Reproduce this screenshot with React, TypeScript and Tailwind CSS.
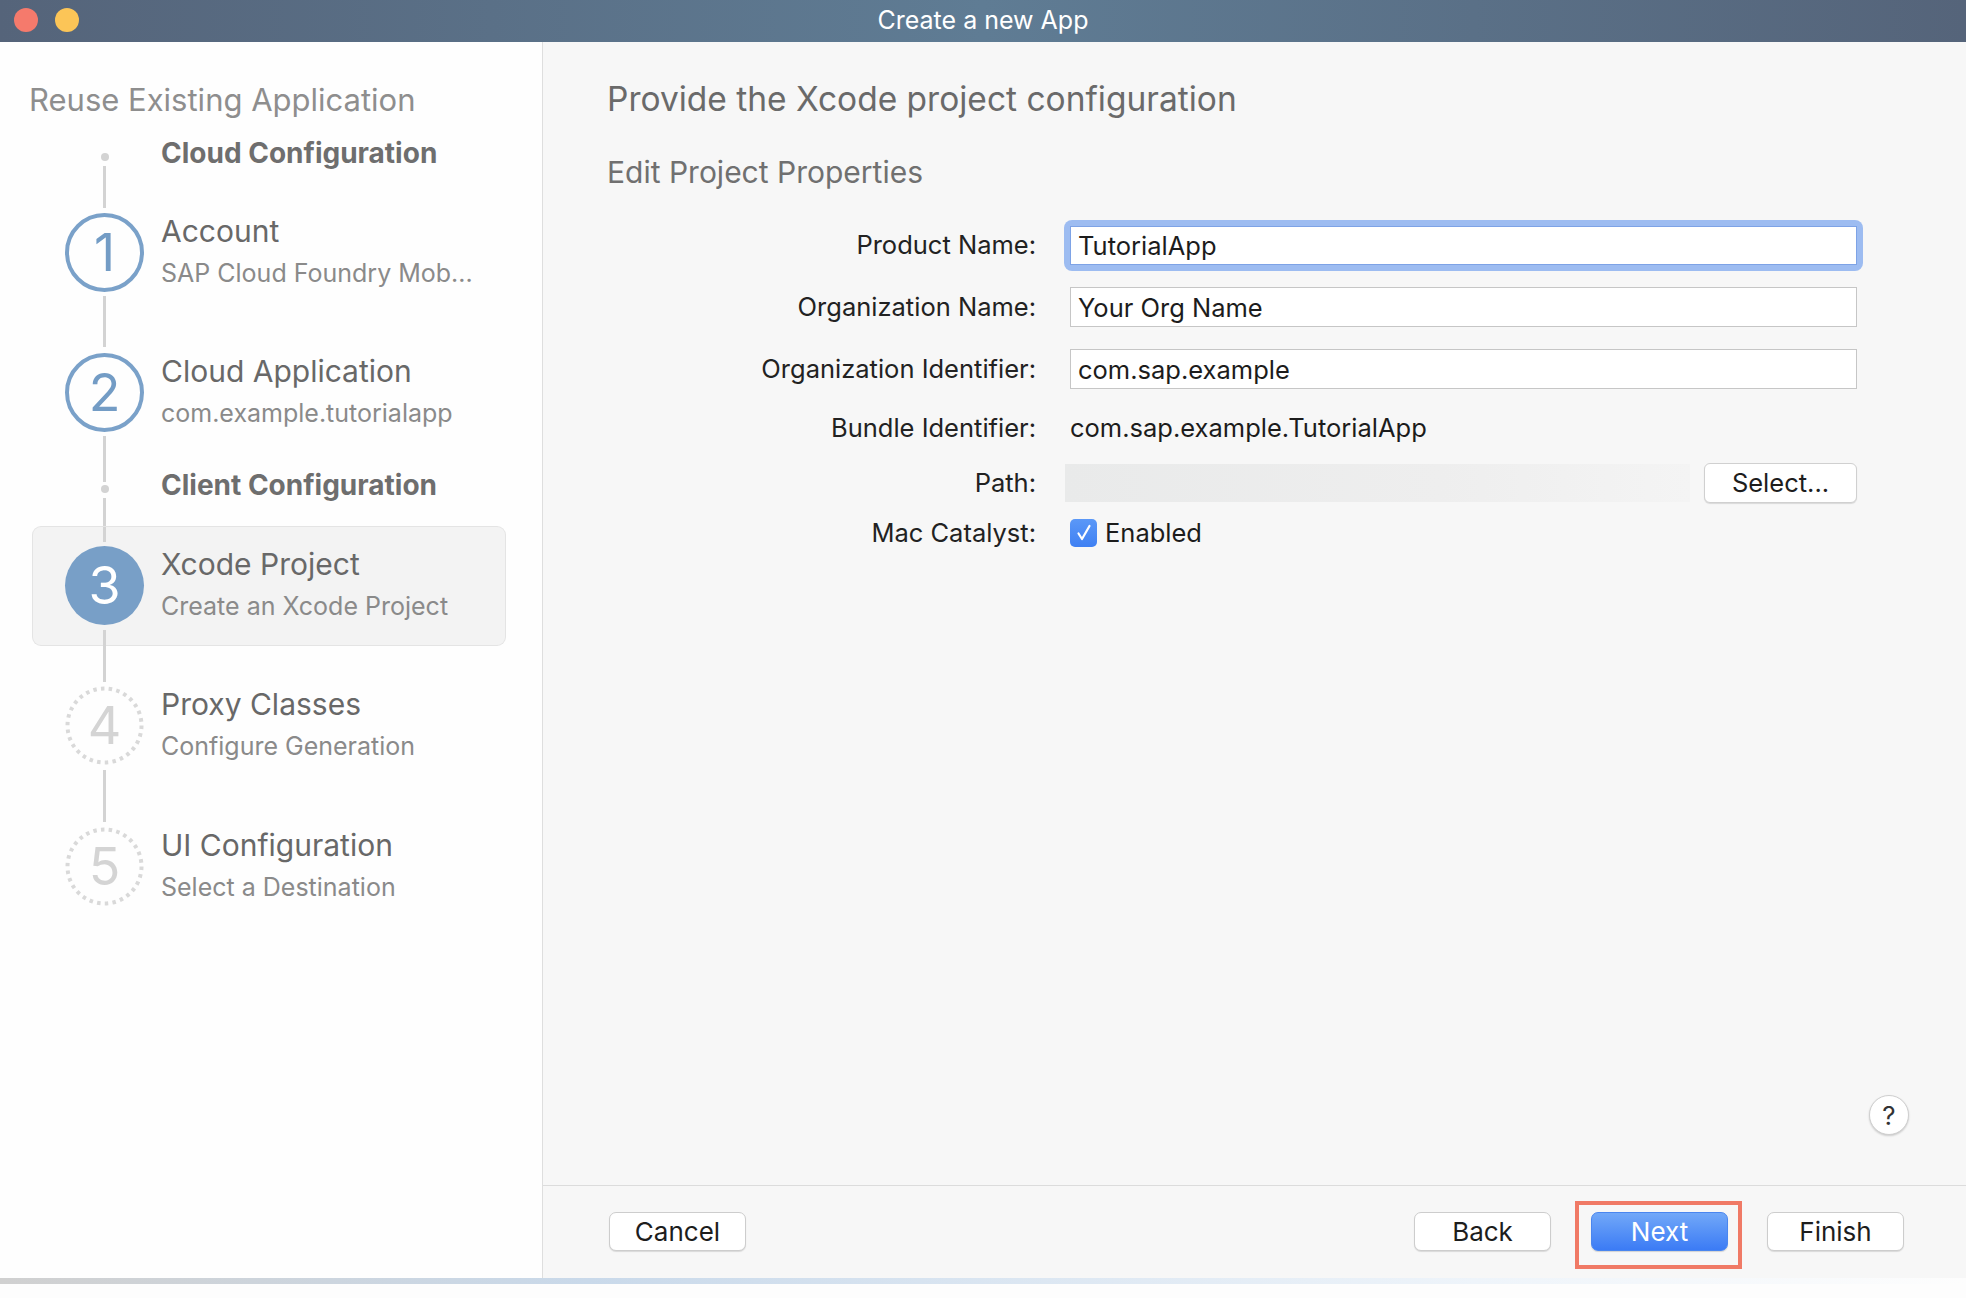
import React from "react";

type StepState = "done" | "active" | "todo";

const Line = ({ h, className = "" }: { h: string; className?: string }) => (
  <div className={`ml-[70px] w-[3px] bg-[#d3d3d3] ${h} ${className}`} />
);

const StepCircle = ({ n, state }: { n: number; state: StepState }) => {
  if (state === "done")
    return (
      <div className="w-[79px] h-[79px] shrink-0 rounded-full border-[4px] border-[#7aa1c9] flex items-center justify-center text-[52px] leading-none text-[#739cc5]">
        {n}
      </div>
    );
  if (state === "active")
    return (
      <div className="w-[79px] h-[79px] shrink-0 rounded-full bg-[#789fc7] flex items-center justify-center text-[52px] leading-none text-white">
        {n}
      </div>
    );
  return (
    <div className="relative w-[79px] h-[79px] shrink-0 flex items-center justify-center text-[52px] leading-none text-[#d4d4d4]">
      <svg className="absolute inset-0" width="79" height="79" viewBox="0 0 79 79">
        <circle cx="39.5" cy="39.5" r="37" fill="none" stroke="#d9d9d9" strokeWidth="4" strokeDasharray="3.5 4.25" />
      </svg>
      <span className="relative">{n}</span>
    </div>
  );
};

const Step = ({
  n,
  state,
  title,
  sub,
  className = "",
}: {
  n: number;
  state: StepState;
  title: string;
  sub: string;
  className?: string;
}) => (
  <div className={`flex items-start ml-[32px] ${className}`}>
    <StepCircle n={n} state={state} />
    <div className="ml-[17px] flex flex-col">
      <div className="text-[30px] leading-[36px] text-[#686868] whitespace-nowrap">{title}</div>
      <div className="mt-[8px] text-[25px] leading-[32px] text-[#8a8a8a] whitespace-nowrap">{sub}</div>
    </div>
  </div>
);

const Button = ({ children, primary = false }: { children: React.ReactNode; primary?: boolean }) => (
  <button
    className={
      primary
        ? "w-[137px] h-[39px] rounded-[7px] bg-[linear-gradient(180deg,#72a8f8,#3b7bf5)] border border-[#4a86ef] text-[26px] text-white flex items-center justify-center shadow-[0_1px_1px_rgba(0,0,0,0.15)]"
        : "w-[137px] h-[39px] rounded-[7px] bg-white border border-[#cdcdcd] text-[26px] text-[#1d1d1d] flex items-center justify-center shadow-[0_1px_1px_rgba(0,0,0,0.12)]"
    }
  >
    {children}
  </button>
);

const Row = ({ label, h, children }: { label: string; h: string; children: React.ReactNode }) => (
  <div className={`flex items-center ${h}`}>
    <div className="w-[429px] text-right text-[25.5px] text-[#222] whitespace-nowrap">{label}</div>
    <div className="ml-[34px] w-[787px] flex items-center">{children}</div>
  </div>
);

export default function App() {
  return (
    <div className="w-[1966px] h-[1298px] bg-[#fdfdfd] flex flex-col [font-family:Inter,sans-serif] overflow-hidden">
      <div className="h-[1278px] flex flex-col">
        {/* Title bar */}
        <div className="relative h-[42px] shrink-0 bg-[linear-gradient(90deg,#55647a,#5f7c94_50%,#55647a)] flex items-center justify-center">
          <div className="absolute left-[14px] top-[8px] flex gap-[17px]">
            <div className="w-[24px] h-[24px] rounded-full bg-[#f57a6c]" />
            <div className="w-[24px] h-[24px] rounded-full bg-[#fcc557]" />
          </div>
          <div className="text-[25px] text-white">Create a new App</div>
        </div>

        <div className="flex-1 flex">
          {/* Sidebar */}
          <div className="w-[543px] shrink-0 bg-[#fefefe] border-r border-[#dedede] pt-[38px]">
            <div className="pl-[29px] text-[31px] leading-[40px] text-[#8e8e8e]">Reuse Existing Application</div>
            <div className="ml-[33px] w-[472px] flex flex-col">
              <div className="mt-[16px] flex items-start">
                <div className="ml-[32px] w-[79px] flex flex-col items-center">
                  <div className="mt-[17px] w-[8px] h-[8px] rounded-full bg-[#d3d3d3]" />
                  <div className="mt-[5px] w-[3px] h-[42px] bg-[#d3d3d3]" />
                </div>
                <div className="ml-[17px] text-[28px] leading-[34px] font-bold text-[#6e6e6e]">Cloud Configuration</div>
              </div>

              <Step n={1} state="done" title="Account" sub="SAP Cloud Foundry Mob..." className="mt-[5px]" />
              <Line h="h-[51px]" className="mt-[4px]" />
              <Step n={2} state="done" title="Cloud Application" sub="com.example.tutorialapp" className="mt-[6px]" />
              <Line h="h-[30px]" className="mt-[4px]" />

              <div className="flex items-start">
                <div className="ml-[32px] w-[79px] flex flex-col items-center">
                  <div className="w-[3px] h-[16px] bg-[#d3d3d3]" />
                  <div className="mt-[3px] w-[8px] h-[8px] rounded-full bg-[#d3d3d3]" />
                  <div className="mt-[5px] w-[3px] h-[29px] bg-[#d3d3d3]" />
                </div>
                <div className="ml-[17px] mt-[2px] text-[28px] leading-[34px] font-bold text-[#6e6e6e]">Client Configuration</div>
              </div>

              <div className="bg-[#f3f3f3] rounded-[8px] ring-1 ring-[#e4e4e4]">
                <Line h="h-[15px]" />
                <Step n={3} state="active" title="Xcode Project" sub="Create an Xcode Project" className="mt-[4px]" />
                <Line h="h-[15px]" className="mt-[5px]" />
              </div>

              <Line h="h-[37px]" />
              <Step n={4} state="todo" title="Proxy Classes" sub="Configure Generation" className="mt-[4px]" />
              <Line h="h-[52px]" className="mt-[5px]" />
              <Step n={5} state="todo" title="UI Configuration" sub="Select a Destination" className="mt-[5px]" />
            </div>
          </div>

          {/* Main */}
          <div className="flex-1 flex flex-col bg-[#f7f7f7]">
            <div className="flex-1 flex flex-col pl-[64px] pt-[37px]">
              <h1 className="text-[33.5px] leading-[40px] text-[#6a6a6a]">Provide the Xcode project configuration</h1>
              <h2 className="mt-[35px] text-[30px] leading-[36px] text-[#707070]">Edit Project Properties</h2>

              <div className="mt-[24px] flex flex-col">
                <Row label="Product Name:" h="h-[62px]">
                  <div className="-m-[6px] p-[6px] rounded-[8px] bg-[#9dbcf1] w-[799px]">
                    <input
                      readOnly
                      value="TutorialApp"
                      className="block w-full h-[39px] bg-white border border-[#7ea3e6] px-[7px] text-[25.5px] text-[#1c1c1c] outline-none"
                    />
                  </div>
                </Row>
                <Row label="Organization Name:" h="h-[62px]">
                  <input
                    readOnly
                    value="Your Org Name"
                    className="block w-full h-[40px] bg-white border border-[#c6c6c6] px-[7px] text-[25.5px] text-[#1c1c1c] outline-none"
                  />
                </Row>
                <Row label="Organization Identifier:" h="h-[62px]">
                  <input
                    readOnly
                    value="com.sap.example"
                    className="block w-full h-[40px] bg-white border border-[#c6c6c6] px-[7px] text-[25.5px] text-[#1c1c1c] outline-none"
                  />
                </Row>
                <Row label="Bundle Identifier:" h="h-[56px]">
                  <span className="text-[25.5px] text-[#1c1c1c]">com.sap.example.TutorialApp</span>
                </Row>
                <Row label="Path:" h="h-[54px]">
                  <div className="-ml-[5px] h-[38px] w-[625px] bg-[linear-gradient(90deg,#e9eaea,#eeeeee_60%,#f4f4f4)]" />
                  <button className="ml-[14px] w-[153px] h-[40px] rounded-[6px] bg-white border border-[#d0d0d0] shadow-[0_1px_1px_rgba(0,0,0,0.12)] text-[25.5px] text-[#1d1d1d] flex items-center justify-center">
                    Select...
                  </button>
                </Row>
                <Row label="Mac Catalyst:" h="h-[46px]">
                  <div className="w-[27px] h-[28px] rounded-[5px] bg-[linear-gradient(180deg,#5b98f7,#3f80f3)] flex items-center justify-center">
                    <svg width="20" height="20" viewBox="0 0 20 20">
                      <path d="M4.5 10.5 L8 16 L15.5 3" fill="none" stroke="white" strokeWidth="2.2" strokeLinecap="round" strokeLinejoin="round" />
                    </svg>
                  </div>
                  <span className="ml-[8px] text-[25.5px] text-[#1c1c1c]">Enabled</span>
                </Row>
              </div>

              <div className="mt-auto flex justify-end pr-[57px] pb-[50px]">
                <div className="w-[40px] h-[40px] rounded-full bg-white border border-[#cfcfcf] shadow-[0_1px_2px_rgba(0,0,0,0.18)] flex items-center justify-center text-[26px] text-[#333]">
                  ?
                </div>
              </div>
            </div>

            {/* Footer */}
            <div className="h-[93px] shrink-0 border-t border-[#dcdcdc] flex items-start pt-[26px] pl-[66px] pr-[62px]">
              <Button>Cancel</Button>
              <div className="flex-1" />
              <Button>Back</Button>
              <div className="relative ml-[40px]">
                <Button primary>Next</Button>
                <span className="absolute -left-[16px] -right-[14px] -top-[11px] -bottom-[18px] border-[4px] border-[#f07a66] pointer-events-none" />
              </div>
              <div className="ml-[39px]">
                <Button>Finish</Button>
              </div>
            </div>
          </div>
        </div>
      </div>
      <div className="h-[6px] shrink-0 bg-[linear-gradient(90deg,#d0d0d0,#c9d9ea_30%,#eef4fa_75%,#fdfdfd)]" />
    </div>
  );
}
